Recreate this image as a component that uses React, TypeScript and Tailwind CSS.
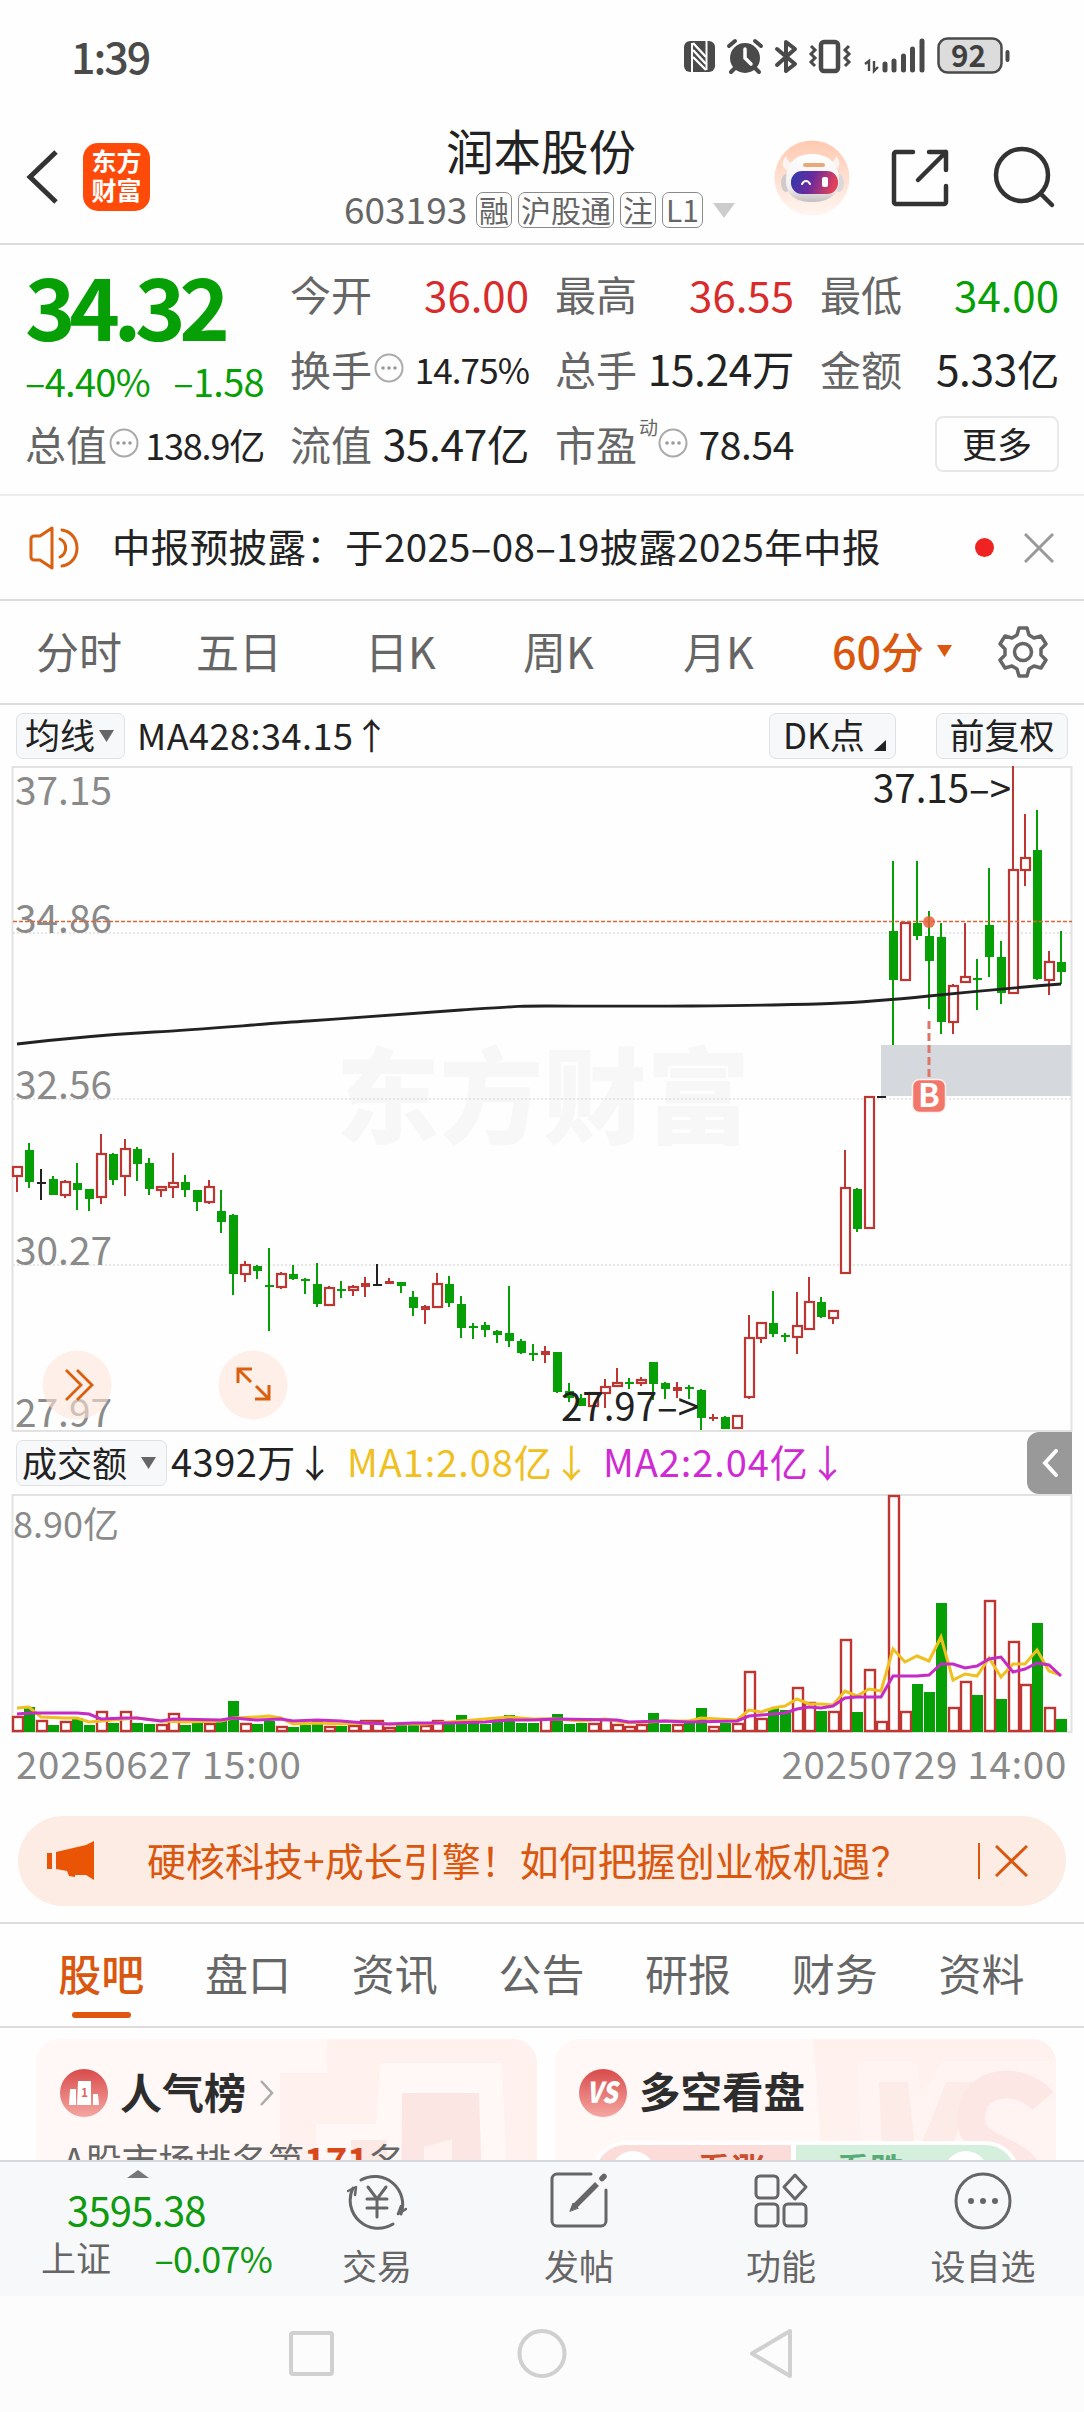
import type { ReactNode } from 'react'
import clsx from 'clsx'

type Kind = 'u' | 'd' | 'k'
// kind, high, body top, body bottom, low, turnover height
type Bar = [Kind, number, number, number, number, number]

const BARS: Bar[] = [
  ['u', 400, 400, 411, 426, 16],
  ['d', 377, 384, 416, 422, 25],
  ['k', 403, 416, 417, 434, 12],
  ['d', 410, 413, 429, 429, 7],
  ['u', 414, 415, 430, 432, 11],
  ['d', 397, 417, 424, 444, 14],
  ['d', 423, 423, 433, 445, 7],
  ['u', 368, 387, 432, 438, 21],
  ['d', 387, 388, 414, 419, 9],
  ['u', 373, 382, 411, 430, 21],
  ['d', 381, 383, 398, 415, 9],
  ['d', 392, 397, 423, 429, 8],
  ['u', 420, 420, 425, 431, 8],
  ['u', 387, 416, 422, 432, 19],
  ['d', 409, 416, 424, 431, 7],
  ['d', 424, 424, 436, 445, 9],
  ['u', 414, 420, 437, 438, 9],
  ['d', 424, 445, 456, 467, 13],
  ['d', 448, 449, 508, 529, 31],
  ['u', 495, 498, 509, 516, 9],
  ['d', 499, 500, 505, 513, 8],
  ['d', 482, 519, 520, 565, 11],
  ['u', 506, 507, 522, 523, 6],
  ['d', 499, 508, 513, 514, 5],
  ['d', 512, 513, 515, 528, 7],
  ['d', 497, 518, 538, 541, 13],
  ['u', 520, 521, 540, 540, 6],
  ['d', 515, 523, 524, 532, 6],
  ['u', 519, 520, 525, 530, 7],
  ['u', 511, 517, 521, 531, 12],
  ['k', 498, 518, 519, 519, 12],
  ['u', 512, 515, 518, 518, 5],
  ['d', 516, 516, 520, 527, 7],
  ['d', 525, 531, 542, 550, 10],
  ['u', 539, 540, 544, 558, 7],
  ['u', 507, 517, 542, 542, 12],
  ['d', 510, 518, 537, 541, 9],
  ['d', 530, 538, 562, 572, 17],
  ['d', 557, 560, 561, 573, 9],
  ['d', 556, 559, 564, 571, 8],
  ['d', 564, 565, 569, 577, 13],
  ['d', 520, 567, 575, 581, 17],
  ['d', 573, 575, 587, 588, 9],
  ['d', 578, 587, 589, 595, 9],
  ['u', 580, 585, 589, 597, 14],
  ['d', 586, 586, 626, 627, 18],
  ['d', 617, 625, 632, 636, 8],
  ['d', 628, 632, 640, 640, 9],
  ['u', 626, 626, 641, 641, 9],
  ['u', 613, 620, 628, 642, 13],
  ['u', 602, 616, 621, 621, 8],
  ['d', 612, 616, 618, 623, 6],
  ['u', 611, 613, 618, 620, 8],
  ['d', 596, 596, 618, 634, 19],
  ['d', 616, 617, 623, 633, 8],
  ['u', 616, 621, 625, 632, 8],
  ['d', 619, 621, 623, 633, 9],
  ['d', 623, 624, 652, 664, 24],
  ['u', 648, 651, 652, 655, 6],
  ['d', 650, 651, 663, 663, 9],
  ['u', 649, 649, 663, 663, 9],
  ['u', 549, 571, 632, 633, 61],
  ['u', 556, 556, 573, 577, 14],
  ['d', 525, 557, 568, 571, 24],
  ['d', 567, 569, 571, 576, 22],
  ['u', 526, 559, 572, 588, 45],
  ['u', 511, 535, 564, 564, 30],
  ['d', 531, 536, 551, 552, 21],
  ['u', 544, 544, 553, 558, 21],
  ['u', 384, 421, 508, 508, 93],
  ['d', 422, 423, 463, 466, 20],
  ['u', 330, 330, 463, 463, 63],
  ['k', 330, 330, 332, 332, 11],
  ['d', 95, 165, 214, 279, 237],
  ['u', 156, 156, 215, 215, 21],
  ['d', 95, 157, 170, 174, 48],
  ['d', 145, 170, 195, 243, 40],
  ['d', 157, 171, 256, 268, 129],
  ['u', 218, 219, 257, 268, 25],
  ['u', 157, 210, 217, 217, 51],
  ['d', 193, 212, 213, 244, 37],
  ['d', 102, 159, 191, 211, 132],
  ['d', 175, 191, 227, 238, 33],
  ['u', 0, 103, 228, 228, 91],
  ['u', 48, 91, 105, 120, 48],
  ['d', 44, 84, 213, 214, 109],
  ['u', 185, 195, 215, 229, 25],
  ['d', 165, 196, 206, 218, 13],
]

// turnover bars drawn hollow although the candle is not a rising one
const HOLLOW_TURNOVER = [2, 30, 51, 72, 73, 81]

const MA1: [number, number][] = [
  [0, 214], [1, 213], [2, 223], [4, 224], [5, 224], [6, 228], [8, 226], [10, 224], [12, 227], [14, 228],
  [17, 227], [18, 224], [20, 223], [21, 222], [22, 224], [23, 230], [25, 229], [27, 230], [29, 229], [31, 230],
  [34, 230], [37, 227], [39, 225], [41, 223], [43, 225], [45, 225], [47, 227], [49, 225], [51, 229], [54, 227],
  [56, 227], [57, 224], [60, 226], [61, 216], [62, 218], [63, 214], [64, 212], [65, 205], [66, 210], [67, 210],
  [68, 211], [69, 197], [70, 202], [71, 195], [72, 197], [73, 155], [74, 168], [75, 162], [76, 167], [77, 143],
  [78, 186], [79, 180], [80, 182], [81, 164], [82, 183], [83, 170], [84, 170], [85, 156], [86, 177], [87, 181],
]

const MA2: [number, number][] = [
  [0, 220], [1, 219], [5, 219], [6, 220], [7, 225], [9, 224], [10, 224], [12, 227], [13, 225], [17, 226],
  [18, 224], [20, 226], [22, 225], [23, 227], [25, 226], [27, 227], [29, 229], [31, 230], [33, 229], [36, 229],
  [39, 228], [41, 226], [43, 226], [45, 225], [50, 226], [51, 228], [54, 227], [56, 228], [60, 227], [61, 222],
  [62, 221], [64, 219], [65, 215], [66, 213], [67, 214], [68, 212], [69, 204], [70, 203], [72, 203], [73, 182],
  [75, 182], [76, 181], [77, 170], [78, 170], [79, 174], [80, 172], [81, 165], [82, 163], [83, 178], [84, 175],
  [85, 169], [86, 171], [87, 182],
]

const COLORS = { u: '#bd3632', d: '#06a006', k: '#222222' }

const barX = (i: number) => 17 + i * 12
const toPoints = (line: [number, number][]) => line.map(([i, y]) => `${barX(i)},${y}`).join(' ')

function StatusIcons() {
  return (
    <svg className="h-[40px] w-[330px]" viewBox="680 36 330 40" fill="none">
      <rect x="684" y="41" width="31" height="31" rx="6" fill="#4a4a4a" />
      <path d="M692 72V43M706.500 41v29" stroke="#fff" strokeWidth="2" />
      <path d="M693 43l13 14M693 50l13 14M693 57l13 13" stroke="#fff" strokeWidth="2.400" />
      <circle cx="745" cy="58" r="15" fill="#4a4a4a" />
      <path d="M729 46l6-5M761 46l-6-5M735 68l-4 4M755 68l4 4" stroke="#4a4a4a" strokeWidth="4" strokeLinecap="round" />
      <path d="M745 49v9l6 6" stroke="#fff" strokeWidth="3.500" strokeLinecap="round" />
      <path d="M777 49l18 15-9 7V42l9 7-18 16" stroke="#4a4a4a" strokeWidth="4" strokeLinejoin="round" strokeLinecap="round" />
      <rect x="821" y="42" width="17" height="29" rx="3" stroke="#4a4a4a" strokeWidth="4.500" />
      <path d="M811 46l4 4-4 4 4 4-4 4 4 4M849 46l-4 4 4 4-4 4 4 4-4 4" stroke="#4a4a4a" strokeWidth="3" />
      <path d="M865 64l4-3v10M874 61v10l4-4" stroke="#4a4a4a" strokeWidth="2.400" />
      <path d="M885 64v6M894 61v9M903.500 56v14M912.500 49v21M922 41v29" stroke="#4a4a4a" strokeWidth="5" strokeLinecap="round" />
      <rect x="938.500" y="38.500" width="63" height="34" rx="9" fill="#dcdcdc" stroke="#4a4a4a" strokeWidth="2.500" />
      <path d="M1007.500 52v8" stroke="#4a4a4a" strokeWidth="4" strokeLinecap="round" />
      <text x="951" y="67" fontSize="31" fontWeight="700" fill="#3f3f3f" textLength="35" lengthAdjust="spacingAndGlyphs">
        92
      </text>
    </svg>
  )
}

function RobotAvatar() {
  return (
    <svg className="h-[76px] w-[76px]" viewBox="0 0 76 76">
      <defs>
        <linearGradient id="halo" x1="0" y1="0" x2="0" y2="1">
          <stop offset="0" stopColor="#ffc9b0" />
          <stop offset="1" stopColor="#fff6f1" />
        </linearGradient>
        <linearGradient id="visor" x1="0" y1="0" x2="1" y2="0.2">
          <stop offset="0" stopColor="#2b3bb0" />
          <stop offset="0.5" stopColor="#6a2a9c" />
          <stop offset="1" stopColor="#e0405a" />
        </linearGradient>
        <linearGradient id="helmet" x1="0" y1="0" x2="0" y2="1">
          <stop offset="0" stopColor="#ffffff" />
          <stop offset="0.7" stopColor="#f1eeee" />
          <stop offset="1" stopColor="#c4c0c2" />
        </linearGradient>
      </defs>
      <circle cx="38" cy="38" r="37.500" fill="url(#halo)" />
      <path d="M12 16c-5 6-5 12 3 15l8-7c-6 0-10-3-11-8zM62 16c5 6 5 12-3 15l-8-7c6 0 10-3 11-8z" fill="#fbf4f1" />
      <ellipse cx="12" cy="43" rx="5" ry="9" fill="#cfcacc" />
      <ellipse cx="65" cy="43" rx="5" ry="9" fill="#dcd8d9" />
      <path d="M12 40c0-17 10-26 26-26s27 9 27 26c0 14-9 22-27 22S12 54 12 40z" fill="url(#helmet)" />
      <rect x="17" y="31" width="47" height="23" rx="11" fill="url(#visor)" />
      <rect x="29" y="23" width="22" height="4" rx="2" fill="#e9a877" />
      <path d="M28 44c2-4 6-4 8 0" fill="none" stroke="#fff" strokeWidth="2" strokeLinecap="round" />
      <rect x="48" y="37" width="6" height="10" rx="2" fill="#fff" />
    </svg>
  )
}

function Badge({ children, className }: { children: ReactNode; className: string }) {
  return (
    <span
      className={clsx(
        'flex h-[36px] items-center justify-center rounded-[7px] border-[1.5px] border-[#8a8a8a] pb-[3px] text-[30px] leading-none text-[#666]',
        className,
      )}
    >
      {children}
    </span>
  )
}

function Header() {
  return (
    <header className="border-b-2 border-[#dcdcdc]">
      <div className="flex h-[112px] items-start justify-between pt-[36px] pr-[74px] pl-[71px]">
        <span className="text-[43px] leading-[38px] font-medium tracking-[-2px] text-[#4a4a4a]">1:39</span>
        <StatusIcons />
      </div>
      <div className="flex h-[131px]">
        <div className="flex w-[344px] items-center pb-[1px] pl-[26px]">
          <svg className="h-[56px] w-[34px]" viewBox="0 0 34 56" fill="none">
            <path d="M30 3L4 28l26 25" stroke="#333" strokeWidth="5" />
          </svg>
          <div className="ml-[23px] flex h-[68px] w-[67px] flex-col items-center justify-center rounded-[15px] bg-[#ff4a0a] pb-[4px] text-[25px] leading-[29px] font-bold text-white">
            <span>东方</span>
            <span>财富</span>
          </div>
        </div>
        <div className="flex w-[394px] flex-col">
          <h1 className="mt-[13px] pl-[102px] text-[47.500px] leading-[50px] text-[#222]">润本股份</h1>
          <div className="mt-[17px] flex h-[36px] items-center">
            <span className="w-[132px] pb-[4px] text-[37px] leading-none text-[#666]">603193</span>
            <Badge className="w-[36px]">融</Badge>
            <Badge className="ml-[6px] w-[96px]">沪股通</Badge>
            <Badge className="ml-[6px] w-[36px]">注</Badge>
            <Badge className="ml-[6px] w-[41px]">L1</Badge>
            <svg className="ml-[10px] h-[15px] w-[22px]" viewBox="0 0 22 15">
              <path d="M0 0h22L11 15z" fill="#ccc" />
            </svg>
          </div>
        </div>
        <div className="flex items-center pl-[36px]">
          <RobotAvatar />
          <svg className="ml-[40px] h-[62px] w-[62px]" viewBox="0 0 62 62" fill="none" stroke="#333" strokeWidth="4.500" strokeLinecap="round" strokeLinejoin="round">
            <path d="M23 5H6a2 2 0 0 0-2 2v48a2 2 0 0 0 2 2h48a2 2 0 0 0 2-2V39M39 5h17v18M56 5L28 33" />
          </svg>
          <svg className="ml-[40px] h-[64px] w-[66px]" viewBox="0 0 66 64" fill="none" stroke="#333" strokeWidth="4.500" strokeLinecap="round">
            <circle cx="30" cy="29" r="26" />
            <path d="M49 48l11 11" />
          </svg>
        </div>
      </div>
    </header>
  )
}

function DotsIcon() {
  return (
    <svg className="mb-[2px] ml-[2px] h-[30px] w-[30px] shrink-0" viewBox="0 0 30 30">
      <circle cx="15" cy="15" r="13.500" fill="none" stroke="#aaa" strokeWidth="2" />
      <circle cx="9" cy="15" r="1.800" fill="#999" />
      <circle cx="15" cy="15" r="1.800" fill="#999" />
      <circle cx="21" cy="15" r="1.800" fill="#999" />
    </svg>
  )
}

interface StatProps {
  label: string
  value: string
  className?: string
  dots?: boolean
  sup?: string
}

function Stat({ label, value, className = 'text-[42.500px] tracking-[-0.400px] text-[#222]', dots, sup }: StatProps) {
  return (
    <div className="flex h-[75px] w-[239px] items-center pb-[4px] leading-none whitespace-nowrap">
      <span className="text-[41px] text-[#666]">{label}</span>
      {sup && <span className="mr-[-2px] mb-[34px] ml-[2px] text-[19px] text-[#666]">{sup}</span>}
      {dots && <DotsIcon />}
      <span className={clsx('ml-auto', className)}>{value}</span>
    </div>
  )
}

function Quote() {
  return (
    <section className="flex h-[251px] gap-[26px] border-b-2 border-[#ececec] pt-[13px] pl-[25px]">
      <div className="w-[239px]">
        <div className="flex h-[100px] items-center pb-[8px] text-[86px] leading-none font-bold tracking-[-6.500px] text-[#06a006]">34.32</div>
        <div className="flex h-[50px] items-center justify-between pb-[4px] text-[38px] leading-none tracking-[-0.700px] whitespace-nowrap text-[#06a006]">
          <span>–4.40%</span>
          <span>–1.58</span>
        </div>
        <Stat label="总值" value="138.9亿" dots className="text-[36px] tracking-[-1.200px] text-[#222]" />
      </div>
      <div>
        <Stat label="今开" value="36.00" className="text-[42px] text-[#d92b2b]" />
        <Stat label="换手" value="14.75%" dots className="text-[35px] tracking-[-0.900px] text-[#222]" />
        <Stat label="流值" value="35.47亿" />
      </div>
      <div>
        <Stat label="最高" value="36.55" className="text-[42px] text-[#d92b2b]" />
        <Stat label="总手" value="15.24万" />
        <Stat label="市盈" sup="动" value="78.54" dots className="text-[39px] tracking-[-0.400px] text-[#222]" />
      </div>
      <div>
        <Stat label="最低" value="34.00" className="text-[42px] text-[#06a006]" />
        <Stat label="金额" value="5.33亿" />
        <div className="mt-[8px] ml-auto flex h-[56px] w-[124px] items-center justify-center rounded-[8px] border-2 border-[#e8e8e8] pb-[4px] text-[35px] leading-none text-[#222]">
          更多
        </div>
      </div>
    </section>
  )
}

function Notice() {
  return (
    <section className="flex h-[105px] items-center border-b-2 border-[#dcdcdc] pl-[27px]">
      <svg className="h-[46px] w-[56px]" viewBox="0 0 56 46" fill="none" stroke="#d9600f" strokeWidth="3" strokeLinecap="round" strokeLinejoin="round">
        <path d="M25 3v40L13 35H7a3 3 0 0 1-3-3V14a3 3 0 0 1 3-3h6z" />
        <path d="M33 14a10 10 0 0 1 0 18M35 5c20 3 20 33 0 36" />
      </svg>
      <span className="ml-[29px] w-[855px] pb-[4px] text-[38.500px] leading-none tracking-[0.350px] whitespace-nowrap text-[#222]">
        中报预披露：于2025–08–19披露2025年中报
      </span>
      <span className="ml-[8px] h-[19px] w-[19px] rounded-full bg-[#f02323]" />
      <svg className="ml-[30px] h-[30px] w-[30px]" viewBox="0 0 30 30" stroke="#999" strokeWidth="3">
        <path d="M1 1l28 28M29 1L1 29" />
      </svg>
    </section>
  )
}

const PERIODS = [
  { name: '分时', width: 'w-[160px]' },
  { name: '五日', width: 'w-[169px]' },
  { name: '日K', width: 'w-[158px]' },
  { name: '周K', width: 'w-[160px]' },
  { name: '月K', width: 'w-[149px]' },
]

function PeriodTabs() {
  return (
    <nav className="flex h-[104px] items-center border-b-2 border-[#dcdcdc] pl-[36px] text-[43px] leading-none text-[#666]">
      {PERIODS.map(period => (
        <span key={period.name} className={clsx('pb-[4px]', period.width)}>
          {period.name}
        </span>
      ))}
      <span className="w-[105px] pb-[4px] font-medium text-[#d9570f]">60分</span>
      <svg className="mb-[2px] h-[12px] w-[15px]" viewBox="0 0 15 12">
        <path d="M0 0h15L7.500 12z" fill="#d9570f" />
      </svg>
      <svg className="ml-[45px] h-[52px] w-[52px]" viewBox="0 0 52 52" fill="none" stroke="#666" strokeWidth="3.500" strokeLinejoin="round">
        <path d="M22 2h8l2 7 5 3 7-2 5 8-5 5v6l5 5-5 8-7-2-5 3-2 7h-8l-2-7-5-3-7 2-5-8 5-5v-6l-5-5 5-8 7 2 5-3z" />
        <circle cx="26" cy="26" r="8.500" />
      </svg>
    </nav>
  )
}

function Chip({ children, className }: { children: ReactNode; className: string }) {
  return (
    <div
      className={clsx(
        'flex h-[46px] items-center rounded-[7px] border border-[#dfe1e4] bg-[#f7f8fa] leading-none whitespace-nowrap text-[#222]',
        className,
      )}
    >
      {children}
    </div>
  )
}

function Caret() {
  return (
    <svg className="h-[12px] w-[15px]" viewBox="0 0 15 12">
      <path d="M0 0h15L7.500 12z" fill="#666" />
    </svg>
  )
}

function IndicatorBar() {
  return (
    <div className="flex h-[61px] items-center pl-[16px]">
      <Chip className="w-[109px] gap-[4px] pl-[8px] text-[35px]">
        <span className="pb-[4px]">均线</span>
        <Caret />
      </Chip>
      <span className="ml-[12px] pb-[3px] text-[36px] leading-none tracking-[0.500px] whitespace-nowrap text-[#222]">MA428:34.15↑</span>
      <Chip className="mr-[40px] ml-auto w-[127px] pl-[13px] text-[35px]">
        <span className="pb-[4px]">DK点</span>
        <svg className="mt-[20px] ml-[9px] h-[11px] w-[12px]" viewBox="0 0 12 11">
          <path d="M12 0v11H0z" fill="#222" />
        </svg>
      </Chip>
      <Chip className="mr-[16px] w-[132px] justify-center text-[35px]">
        <span className="pb-[4px]">前复权</span>
      </Chip>
    </div>
  )
}

function Candle({ bar, index }: { bar: Bar; index: number }) {
  const [kind, high, top, bottom, low] = bar
  const x = barX(index)
  const color = COLORS[kind]
  const height = Math.max(bottom - top, 2)
  return (
    <g>
      {high < top && <path d={`M${x} ${high}V${top}`} stroke={color} strokeWidth="2" />}
      {low > bottom && <path d={`M${x} ${bottom}V${low}`} stroke={color} strokeWidth="2" />}
      {kind === 'u' && height > 4 ? (
        <rect x={x - 4} y={top + 1} width="9" height={height - 2} fill="#fff" stroke={color} strokeWidth="2.200" />
      ) : (
        <rect x={x - 4} y={top} width="9" height={height} fill={color} />
      )}
    </g>
  )
}

const PRICE_LABELS = [
  { text: '37.15', y: 39 },
  { text: '34.86', y: 167 },
  { text: '32.56', y: 333 },
  { text: '30.27', y: 499 },
  { text: '27.97', y: 661 },
]

function CandleChart() {
  return (
    <svg className="block h-[666px] w-[1084px]" viewBox="0 0 1084 666" fill="none">
      <text x="336" y="370" fontSize="104" fontWeight="900" fill="#f7f7f7" textLength="414" lengthAdjust="spacingAndGlyphs">
        东方财富
      </text>
      <rect x="12.500" y="1" width="1059" height="664" stroke="#e2e2e2" strokeWidth="2" />
      <path d="M13 167H1071M13 333H1071M13 499H1071" stroke="#e0e0e0" strokeWidth="1.500" strokeDasharray="2 2" />
      {PRICE_LABELS.map(label => (
        <text key={label.text} x="15" y={label.y} fontSize="39" fill="#8a8a8a" textLength="97" lengthAdjust="spacingAndGlyphs">
          {label.text}
        </text>
      ))}
      <rect x="881" y="279" width="190" height="51" fill="#d5d8dc" />
      {BARS.map((bar, i) => (
        <Candle key={i} bar={bar} index={i} />
      ))}
      <path d="M13 155.500H1072" stroke="#d9643a" strokeWidth="1.300" strokeDasharray="4 2" />
      <path
        d="M17 278C60 273 100 269 154 266S260 258 308 255S400 248 461 244S520 240 546 240S640 240.500 692 240S790 239 830 237.500S900 233 929 230S1010 222 1061 218"
        stroke="#222"
        strokeWidth="2.800"
      />
      <circle cx="929" cy="156" r="6" fill="#e8603c" fillOpacity="0.850" />
      <path d="M929 255v58" stroke="#df7468" strokeWidth="3" strokeDasharray="8 4" />
      <rect x="912.500" y="313.500" width="33" height="33" rx="7" fill="#f3766a" stroke="#fff0ee" strokeWidth="1.500" />
      <text x="929" y="341" fontSize="32" fontWeight="700" fill="#fff" textAnchor="middle">
        B
      </text>
      <text x="873" y="37" fontSize="39" fill="#222" textLength="138" lengthAdjust="spacingAndGlyphs">
        {'37.15–>'}
      </text>
      <text x="561" y="655" fontSize="39" fill="#222" textLength="138" lengthAdjust="spacingAndGlyphs">
        {'27.97–>'}
      </text>
      <circle cx="77" cy="619" r="34.500" fill="#fde4d9" fillOpacity="0.600" />
      <circle cx="253" cy="619" r="34.500" fill="#fde4d9" fillOpacity="0.600" />
      <path d="M66 604l15 15-15 15M77 604l15 15-15 15" stroke="#d9600f" strokeWidth="2.800" />
      <path d="M238 617v-14h14M239 604l12 12M269 619v14h-14M268 632l-12-12" stroke="#d9600f" strokeWidth="3" />
    </svg>
  )
}

function TurnoverBar() {
  return (
    <div className="flex h-[62px] items-center pl-[16px] text-[38px] leading-none whitespace-nowrap">
      <Chip className="w-[151px] gap-[14px] pl-[5px] text-[35px]">
        <span className="pb-[4px]">成交额</span>
        <Caret />
      </Chip>
      <span className="ml-[4px] w-[176px] pb-[4px] tracking-[0.500px] text-[#222]">4392万↓</span>
      <span className="w-[256px] pb-[4px] tracking-[0.900px] text-[#efc01f]">MA1:2.08亿↓</span>
      <span className="pb-[4px] tracking-[0.900px] text-[#cf2bd3]">MA2:2.04亿↓</span>
      <div className="mr-[12px] ml-auto flex h-[62px] w-[45px] items-center justify-center rounded-l-[12px] bg-[#999]">
        <svg className="h-[28px] w-[16px]" viewBox="0 0 16 28" fill="none">
          <path d="M14 2L3 14l11 12" stroke="#fff" strokeWidth="4" strokeLinecap="round" />
        </svg>
      </div>
    </div>
  )
}

function TurnoverChart() {
  return (
    <svg className="block h-[240px] w-[1084px]" viewBox="0 0 1084 240" fill="none">
      <rect x="12.500" y="1" width="1059" height="237" stroke="#e2e2e2" strokeWidth="2" />
      <text x="13" y="44" fontSize="36" fill="#8a8a8a" textLength="106" lengthAdjust="spacingAndGlyphs">
        8.90亿
      </text>
      {BARS.map(([kind, , , , , height], i) => {
        const x = barX(i)
        const hollow = kind === 'u' || HOLLOW_TURNOVER.includes(i)
        return hollow ? (
          <rect key={i} x={x - 4} y={239 - height} width="10" height={height - 2} fill="#fff" stroke={COLORS.u} strokeWidth="2.400" />
        ) : (
          <rect key={i} x={x - 5} y={238 - height} width="11" height={height} fill={COLORS.d} />
        )
      })}
      <polyline points={toPoints(MA1)} stroke="#efc01f" strokeWidth="3" />
      <polyline points={toPoints(MA2)} stroke="#c52bc5" strokeWidth="3" />
    </svg>
  )
}

function Promo() {
  return (
    <div className="mx-[18px] mt-[22px] flex h-[90px] items-center rounded-full bg-[#fcece3] pl-[29px] text-[#d9570f]">
      <svg className="h-[40px] w-[47px]" viewBox="0 0 47 40" fill="#e95504">
        <path d="M0 12h5v16H0zM9 11l30-7 8-4v39l-8-5H28v2l-6-1-2-5-11-2z" />
      </svg>
      <span className="ml-[53px] w-[831px] pb-[4px] text-[39px] leading-none whitespace-nowrap">
        硬核科技+成长引擎！如何把握创业板机遇？
      </span>
      <span className="h-[36px] w-[1.500px] bg-[#d9570f]" />
      <svg className="ml-[15px] h-[32px] w-[33px]" viewBox="0 0 33 32" stroke="#d9570f" strokeWidth="3">
        <path d="M1 1l31 30M32 1L1 31" />
      </svg>
    </div>
  )
}

const TABS = ['股吧', '盘口', '资讯', '公告', '研报', '财务', '资料']

function ContentTabs() {
  return (
    <nav className="mt-[16px] flex h-[106px] border-y-2 border-[#dcdcdc] pl-[28px]">
      {TABS.map((tab, i) => (
        <div key={tab} className="flex w-[146.700px] flex-col items-center pt-[27px]">
          <span className={clsx('text-[43px] leading-[43px]', i === 0 ? 'font-medium text-[#d9570f]' : 'text-[#666]')}>{tab}</span>
          {i === 0 && <span className="mt-[18px] h-[6px] w-[59px] rounded-full bg-[#e0560f]" />}
        </div>
      ))}
    </nav>
  )
}

function Cards() {
  return (
    <section className="flex h-[132px] gap-[18px] overflow-hidden pt-[11px] pl-[36px]">
      <div className="relative h-[180px] w-[501px] overflow-hidden rounded-t-[24px] bg-[#fff8f6]">
        <svg className="absolute inset-0 h-[180px] w-[501px]" viewBox="0 0 501 180">
          <path d="M291 0h210v180h-28L466 24H344l-4 61h-60v95H244V34h47z" fill="#fdeeeb" fillOpacity="0.700" />
          <path d="M366 54h77l4 126h-82z" fill="#fbe6e3" />
          <path d="M388 108l28-8v60h-28z" fill="#fff2ef" />
          <path d="M315 101h36v60h-36z" fill="#fce9e6" />
        </svg>
        <div className="relative flex h-[108px] items-center pl-[24px]">
          <svg className="h-[48px] w-[48px]" viewBox="0 0 48 48">
            <defs>
              <linearGradient id="disc" x1="0" y1="0" x2="0" y2="1">
                <stop offset="0" stopColor="#d84b4b" />
                <stop offset="1" stopColor="#f5a7a2" />
              </linearGradient>
            </defs>
            <circle cx="24" cy="24" r="24" fill="url(#disc)" />
            <path d="M10 20h6v16H9zM18 12h13v24H17zM33 25h5l1 11h-6z" fill="#fff" />
            <text x="24.500" y="28" fontSize="12" fontWeight="700" fill="#dd6661" textAnchor="middle">
              1
            </text>
          </svg>
          <span className="ml-[12px] pb-[5px] text-[42px] leading-none font-bold text-[#2d2d2d]">人气榜</span>
          <svg className="ml-[13px] h-[26px] w-[15px]" viewBox="0 0 15 26" fill="none">
            <path d="M2 1l11 12L2 25" stroke="#aaa" strokeWidth="2.500" />
          </svg>
        </div>
        <div className="relative mt-[-8px] pl-[27px] text-[36.500px] leading-[42px] whitespace-nowrap text-[#666]">
          A股市场排名第<b className="text-[#d8481c]">171</b>名
        </div>
      </div>
      <div className="relative h-[180px] w-[501px] overflow-hidden rounded-t-[24px] bg-[#fff8f6]">
        <svg className="absolute inset-0 h-[180px] w-[501px]" viewBox="0 0 501 180">
          <path d="M258 0h243v180H272z" fill="#fdeeeb" fillOpacity="0.700" />
          <path d="M302 22h60l4 34 22-34h113v158H310z" fill="#fff4f1" />
          <path d="M324 43h29l8 76 30-76h33l-58 137h-36z" fill="#fdebe8" />
          <path d="M488 62c-22-26-72-22-72 18 0 34 58 30 58 60 0 20-22 30-46 26" fill="none" stroke="#fde7e4" strokeWidth="28" />
        </svg>
        <div className="relative flex h-[108px] items-center pl-[24px]">
          <svg className="h-[48px] w-[48px]" viewBox="0 0 48 48">
            <circle cx="24" cy="24" r="24" fill="url(#disc)" />
            <text x="23" y="34" fontSize="29" fontWeight="900" fontStyle="italic" fill="#fff" textAnchor="middle" textLength="31" lengthAdjust="spacingAndGlyphs">
              VS
            </text>
          </svg>
          <span className="ml-[12px] pb-[5px] text-[41.500px] leading-none font-bold text-[#2d2d2d]">多空看盘</span>
        </div>
        <div className="relative mx-[36px] mt-[-6px] flex h-[70px] overflow-hidden rounded-full border-4 border-white bg-white text-[34px] leading-[40px] font-bold">
          <div className="flex flex-1 bg-[#fcdcd8] pt-[4px] pl-[16px] text-[#c9502f]">
            <span className="mt-[2px] h-[44px] w-[44px] rounded-full bg-white" />
            <span className="ml-[42px]">看涨</span>
          </div>
          <div className="ml-[5px] flex flex-1 bg-[#d5efdd] pt-[4px] pl-[40px] text-[#58ab78]">
            <span>看跌</span>
            <span className="mt-[2px] ml-[40px] h-[44px] w-[44px] rounded-full bg-white" />
          </div>
        </div>
      </div>
    </section>
  )
}

const ACTIONS = [
  {
    name: '交易',
    icon: (
      <>
        <path d="M14 10a28 28 0 0 1 40 34M46 54a28 28 0 0 1-40-36" />
        <path d="M1 21l8-4-1 8M59 39l-8 5 3-8" strokeWidth="2.500" />
        <path d="M21 17l9 12 9-12M20 29h20M20 38h20M30 29v18" />
      </>
    ),
  },
  {
    name: '发帖',
    icon: (
      <>
        <path d="M42 4H8a5 5 0 0 0-5 5v42a5 5 0 0 0 5 5h44a5 5 0 0 0 5-5V20" />
        <path d="M48 14L26 36" strokeWidth="5.500" strokeLinecap="butt" />
        <path d="M21 41l3-8 5 5z" fill="#666" strokeWidth="1" />
        <path d="M53 8.500l2-2" strokeWidth="5.500" />
      </>
    ),
  },
  {
    name: '功能',
    icon: (
      <>
        <rect x="5" y="6" width="22" height="22" rx="4" />
        <rect x="5" y="34" width="22" height="22" rx="4" />
        <rect x="33" y="34" width="22" height="22" rx="4" />
        <path d="M44 5l11 12-11 12-11-12z" />
      </>
    ),
  },
  {
    name: '设自选',
    icon: (
      <>
        <circle cx="30" cy="31" r="27" />
        <path d="M18 31h.01M30 31h.01M42 31h.01" strokeWidth="6" />
      </>
    ),
  },
]

function BottomBar() {
  return (
    <footer className="flex h-[136px] border-t-2 border-[#d5d8dc] bg-[#f7f8fa]">
      <div className="flex w-[276px] flex-col">
        <svg className="mt-[8px] ml-[127px] h-[8px] w-[22px]" viewBox="0 0 22 8">
          <path d="M11 0l11 8H0z" fill="#777" />
        </svg>
        <span className="mt-[6px] pl-[67px] text-[40px] leading-[50px] tracking-[-0.800px] text-[#0f9a0f]">3595.38</span>
        <div className="flex items-center justify-between pr-[4px] pl-[41px] leading-[46px]">
          <span className="text-[35px] text-[#666]">上证</span>
          <span className="text-[36px] tracking-[-0.800px] text-[#0f9a0f]">–0.07%</span>
        </div>
      </div>
      {ACTIONS.map(action => (
        <div key={action.name} className="flex w-[202px] flex-col items-center pt-[8px]">
          <svg className="h-[60px] w-[60px]" viewBox="0 0 60 60" fill="none" stroke="#666" strokeWidth="3" strokeLinecap="round" strokeLinejoin="round">
            {action.icon}
          </svg>
          <span className="mt-[15px] text-[35px] leading-[40px] text-[#666]">{action.name}</span>
        </div>
      ))}
    </footer>
  )
}

function SystemNav() {
  return (
    <div className="flex h-[116px] items-center justify-center gap-[178px] bg-[#fcfcfc]">
      <svg className="h-[52px] w-[52px]" viewBox="0 0 52 52" fill="none" stroke="#d0d0d0" strokeWidth="4">
        <rect x="5" y="5" width="41" height="41" rx="2" />
      </svg>
      <svg className="h-[52px] w-[52px]" viewBox="0 0 52 52" fill="none" stroke="#d0d0d0" strokeWidth="4">
        <circle cx="26" cy="25.500" r="22.500" />
      </svg>
      <svg className="h-[52px] w-[52px]" viewBox="0 0 52 52" fill="none" stroke="#d0d0d0" strokeWidth="4" strokeLinejoin="round">
        <path d="M44 3v45L6 25.500z" />
      </svg>
    </div>
  )
}

export default function App() {
  return (
    <main className="h-[2412px] w-[1084px] overflow-hidden bg-[#fefefe] font-['Noto_Sans_CJK_SC',sans-serif]">
      <Header />
      <Quote />
      <Notice />
      <PeriodTabs />
      <IndicatorBar />
      <CandleChart />
      <TurnoverBar />
      <TurnoverChart />
      <div className="flex h-[60px] items-center justify-between pr-[17px] pb-[4px] pl-[16px] text-[38.500px] leading-none tracking-[0.700px] text-[#8a8a8a]">
        <span>20250627 15:00</span>
        <span>20250729 14:00</span>
      </div>
      <Promo />
      <ContentTabs />
      <Cards />
      <BottomBar />
      <SystemNav />
    </main>
  )
}
